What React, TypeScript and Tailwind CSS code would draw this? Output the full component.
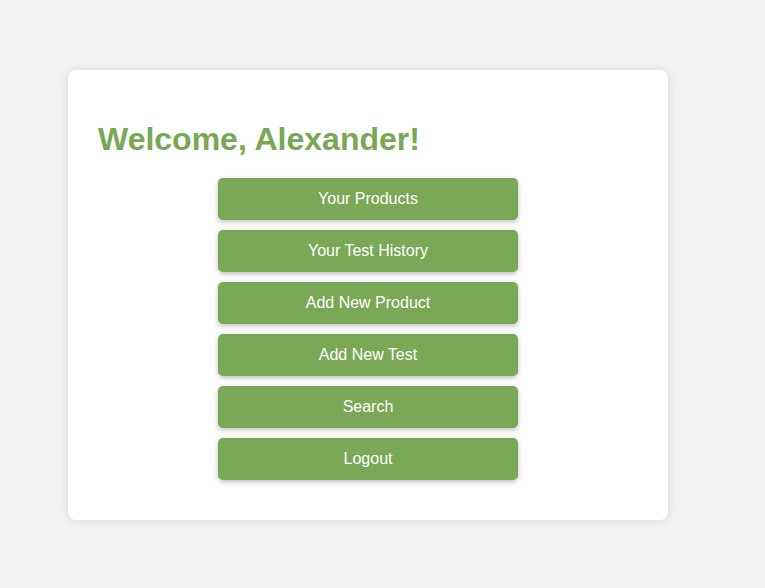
const items = ['Your Products', 'Your Test History', 'Add New Product', 'Add New Test', 'Search', 'Logout'];

export default function App() {
  return (
    <div className="min-h-[588px] bg-[#f2f2f2] pl-[68px] pt-[70px] font-['Liberation_Sans',Arial,sans-serif]">
      <div className="w-[600px] h-[450px] rounded-lg bg-white px-[30px] pt-[30px] shadow-[0_0_10px_rgba(0,0,0,0.1)]">
        <h1 className="mt-[21px] text-[32px] font-bold leading-[37px] text-[#78a856]">Welcome, Alexander!</h1>
        <div className="mt-[20px] flex flex-col items-center gap-[10px]">
          {items.map((label) => (
            <button
              key={label}
              className="h-[42px] w-[300px] rounded-[5px] bg-[#79a956] text-[16px] text-white shadow-[0_2px_5px_rgba(0,0,0,0.25)]"
            >
              {label}
            </button>
          ))}
        </div>
      </div>
    </div>
  );
}
